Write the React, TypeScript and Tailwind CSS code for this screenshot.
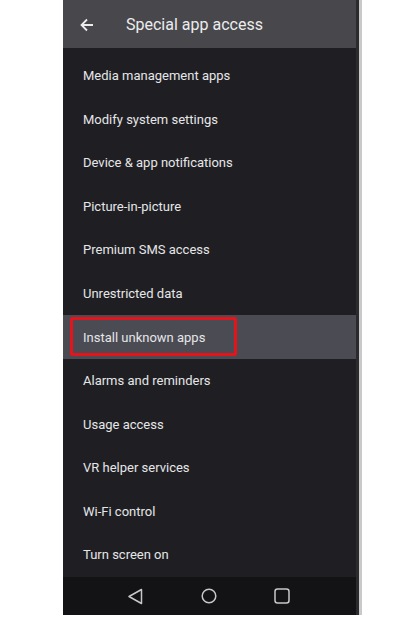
const items = [
  "Media management apps",
  "Modify system settings",
  "Device & app notifications",
  "Picture-in-picture",
  "Premium SMS access",
  "Unrestricted data",
  "Install unknown apps",
  "Alarms and reminders",
  "Usage access",
  "VR helper services",
  "Wi-Fi control",
  "Turn screen on",
];

export default function App() {
  return (
    <div className="w-full h-[618px] bg-white font-['Roboto',sans-serif]">
      <div className="ml-[63px] flex h-[615px] w-[299px]">
        <div className="flex w-[293px] flex-col bg-[#1f1f23]">
          {/* top app bar */}
          <div className="flex h-[48px] items-center bg-[#47474c] pt-[2px] text-[#ececec]">
            <svg
              className="ml-[16px]"
              width="16"
              height="16"
              viewBox="0 0 16 16"
              fill="none"
              stroke="currentColor"
              strokeWidth="1.8"
            >
              <path d="M14 8H2.5M8 2.5 2.5 8 8 13.5" />
            </svg>
            <span className="ml-[31px] text-[16px]">Special app access</span>
          </div>

          <div className="flex flex-1 flex-col pt-[6px]">
            {items.map((label) => {
              const active = label === "Install unknown apps";
              return (
                <div
                  key={label}
                  className={`relative flex flex-1 items-center pl-5 text-[13px] text-[#e6e6e8] ${
                    active ? "bg-[#4b4b53]" : ""
                  }`}
                >
                  {label}
                  {active && (
                    <div className="absolute left-[7px] top-[2px] h-[39px] w-[167px] rounded-[2px] border-[3px] border-[#e3141b]" />
                  )}
                </div>
              );
            })}
          </div>

          {/* nav bar */}
          <div className="flex h-[38px] items-center bg-[#131316] text-[#c8c8cc]">
            <svg className="ml-[64px]" width="17" height="17" viewBox="0 0 17 17" fill="none" stroke="currentColor" strokeWidth="1.5">
              <path d="M14.5 1.5v14L2 8.5z" strokeLinejoin="round" />
            </svg>
            <svg className="ml-[57px]" width="16" height="16" viewBox="0 0 16 16" fill="none" stroke="currentColor" strokeWidth="1.5">
              <circle cx="8" cy="8" r="6.8" />
            </svg>
            <svg className="ml-[57px]" width="16" height="16" viewBox="0 0 16 16" fill="none" stroke="currentColor" strokeWidth="1.5">
              <rect x="1" y="1" width="14" height="14" rx="2.5" />
            </svg>
          </div>
        </div>
        <div className="w-[3px] bg-[#2b2b2e]" />
        <div className="w-[3px] bg-[#c9c9c9]" />
      </div>
    </div>
  );
}
